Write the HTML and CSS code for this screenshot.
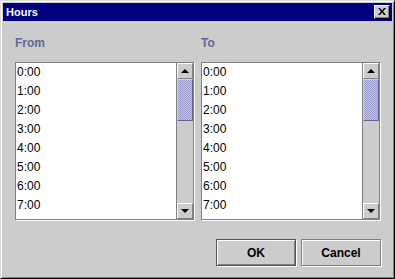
FILE: index.html
```html
<!DOCTYPE html>
<html>
<head>
<meta charset="utf-8">
<link rel="stylesheet" href="styles.css">
</head>
<body>
<div class="window">
  <div class="titlebar">
    <span class="title">Hours</span>
    <div class="close">
      <svg width="8" height="7" viewBox="0 0 8 7"><path d="M0 0h2l2 2.5L6 0h2L5 3.5 8 7H6L4 4.5 2 7H0l3-3.5z" fill="#000"/></svg>
    </div>
  </div>
  <div class="content">
    <div class="columns">
      <div class="col">
        <div class="label">From</div>
        <div class="list">
          <div class="items">
            <div class="item">0:00</div><div class="item">1:00</div><div class="item">2:00</div><div class="item">3:00</div>
            <div class="item">4:00</div><div class="item">5:00</div><div class="item">6:00</div><div class="item">7:00</div>
          </div>
          <div class="scrollbar">
            <div class="arrow"><span class="tri up"></span></div>
            <div class="track"><div class="thumb"></div></div>
            <div class="arrow"><span class="tri down"></span></div>
          </div>
        </div>
      </div>
      <div class="col">
        <div class="label">To</div>
        <div class="list">
          <div class="items">
            <div class="item">0:00</div><div class="item">1:00</div><div class="item">2:00</div><div class="item">3:00</div>
            <div class="item">4:00</div><div class="item">5:00</div><div class="item">6:00</div><div class="item">7:00</div>
          </div>
          <div class="scrollbar">
            <div class="arrow"><span class="tri up"></span></div>
            <div class="track"><div class="thumb"></div></div>
            <div class="arrow"><span class="tri down"></span></div>
          </div>
        </div>
      </div>
    </div>
    <div class="buttons">
      <div class="btn default">OK</div>
      <div class="btn">Cancel</div>
    </div>
  </div>
</div>
</body>
</html>
```
FILE: styles.css
```css
html, body { margin: 0; padding: 0; background: #cccccc; }
body { font-family: "Liberation Sans", Arial, sans-serif; }

.window {
  width: 395px;
  height: 279px;
  box-sizing: border-box;
  background: #cccccc;
  border: 1px solid;
  border-color: #dcdcdc #000 #000 #dcdcdc;
  box-shadow: inset 1px 1px 0 #fff, inset -1px -1px 0 #808080;
  padding: 2px;
  display: flex;
  flex-direction: column;
}

.titlebar {
  height: 18px;
  background: #000080;
  display: flex;
  align-items: center;
  justify-content: space-between;
  padding-left: 3px;
  padding-right: 2px;
}
.title {
  color: #fff;
  font-weight: bold;
  font-size: 11px;
  line-height: 18px;
}
.close {
  width: 16px;
  height: 14px;
  box-sizing: border-box;
  background: #cccccc;
  border: 1px solid;
  border-color: #fff #000 #000 #fff;
  box-shadow: inset -1px -1px 0 #808080;
  display: flex;
  align-items: center;
  justify-content: center;
  padding: 0 1px 1px 0;
}
.close svg { display: block; }

.content {
  flex: 1;
  padding: 15px 12px 10px 12px;
  display: flex;
  flex-direction: column;
}

.columns {
  display: grid;
  grid-template-columns: 179px 179px;
  column-gap: 7px;
}

.label {
  height: 14px;
  line-height: 14px;
  font-size: 12px;
  font-weight: bold;
  color: #666699;
}

.list {
  margin-top: 12px;
  height: 158px;
  box-sizing: border-box;
  border: 1px solid #808080;
  box-shadow: 1px 1px 0 #fff;
  background: #fff;
  display: flex;
}

.items {
  flex: 1;
  overflow: hidden;
}
.item {
  height: 19px;
  line-height: 19px;
  font-size: 12px;
  color: #000;
  padding-left: 1px;
}

.scrollbar {
  width: 16px;
  display: flex;
  flex-direction: column;
  background: #cccccc;
  border-left: 1px solid #808080;
}
.arrow {
  height: 16px;
  box-sizing: border-box;
  background: #cccccc;
  border: 1px solid;
  border-color: #fff #808080 #808080 #fff;
  display: flex;
  align-items: center;
  justify-content: center;
}
.tri {
  width: 0;
  height: 0;
  border-left: 4px solid transparent;
  border-right: 4px solid transparent;
}
.tri.up { border-bottom: 4px solid #000; }
.tri.down { border-top: 4px solid #000; }

.track {
  flex: 1;
  background: #cccccc;
}
.thumb {
  height: 42px;
  box-sizing: border-box;
  border: 1px solid;
  border-color: #ccccff #666699 #666699 #ccccff;
  background-color: #9999cc;
  background-image: repeating-conic-gradient(#c4c4ec 0 25%, #9999cc 0 50%);
  background-size: 2px 2px;
}

.buttons {
  margin-top: 19px;
  display: flex;
  justify-content: flex-end;
  gap: 5px;
  margin-right: -1px;
}
.btn {
  width: 80px;
  height: 27px;
  box-sizing: border-box;
  border: 1px solid #808080;
  box-shadow: 1px 1px 0 #fff, inset 1px 1px 0 #fff;
  font-size: 12px;
  font-weight: bold;
  color: #000;
  display: flex;
  align-items: center;
  justify-content: center;
}
.btn.default {
  border-color: #555;
  box-shadow: 1px 1px 0 #fff, inset 1px 1px 0 #fff, inset -1px -1px 0 #808080;
}
```
